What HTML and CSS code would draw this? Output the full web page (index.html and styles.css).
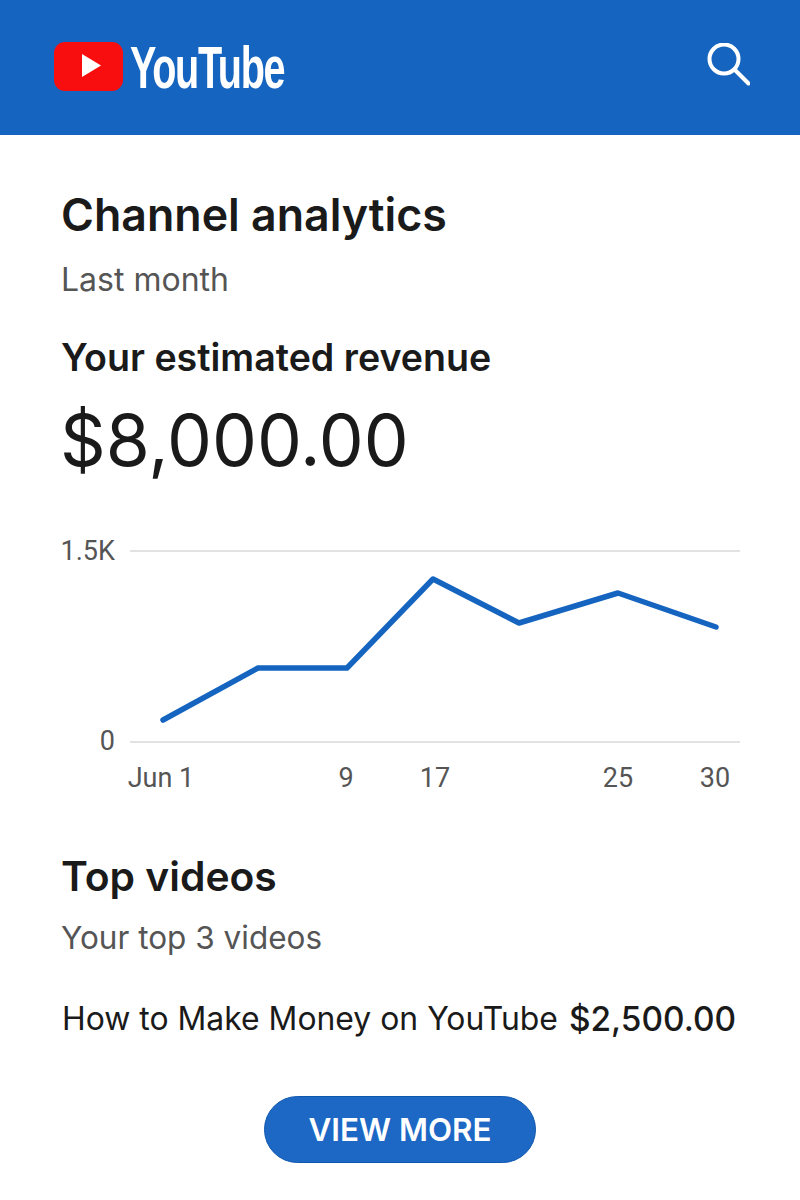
FILE: index.html
```html
<!DOCTYPE html>
<html lang="en">
<head>
<meta charset="utf-8">
<title>Channel analytics</title>
<link rel="stylesheet" href="styles.css">
</head>
<body>
<header class="topbar">
  <div class="brand">
    <svg class="brand-mark" viewBox="0 0 70 50" width="70" height="50" aria-hidden="true">
      <rect x="0" y="0" width="69" height="49" rx="11" fill="#f80e0e"/>
      <path d="M28 12 L47 23.5 L28 35 Z" fill="#fff"/>
    </svg>
    <span class="brand-name">YouTube</span>
  </div>
  <svg class="search" viewBox="0 0 44 44" width="44" height="44" aria-hidden="true">
    <circle cx="18" cy="16" r="14.5" fill="none" stroke="#fff" stroke-width="4"/>
    <path d="M29 27 L42.5 40.5" fill="none" stroke="#fff" stroke-width="4" stroke-linecap="round"/>
  </svg>
</header>
<main class="content">
  <h1 class="title">Channel analytics</h1>
  <p class="sub period">Last month</p>
  <h2 class="label">Your estimated revenue</h2>
  <p class="amount">$8,000.00</p>
  <svg class="chart" viewBox="0 0 800 270" width="800" height="270" role="img" aria-label="Revenue chart">
    <line class="grid" x1="130" y1="21" x2="740" y2="21"/>
    <line class="grid" x1="130" y1="212" x2="740" y2="212"/>
    <text class="tick" x="115" y="30" text-anchor="end">1.5K</text>
    <text class="tick" x="115" y="220" text-anchor="end">0</text>
    <polyline class="series" points="163,190 258,138 347,138 433,49 519,93 618,63 716,97"/>
    <text class="tick" x="161" y="257" text-anchor="middle">Jun 1</text>
    <text class="tick" x="346" y="257" text-anchor="middle">9</text>
    <text class="tick" x="435" y="257" text-anchor="middle">17</text>
    <text class="tick" x="618" y="257" text-anchor="middle">25</text>
    <text class="tick" x="715" y="257" text-anchor="middle">30</text>
  </svg>
  <h2 class="section">Top videos</h2>
  <p class="sub videos">Your top 3 videos</p>
  <div class="video-row">
    <span class="video-name">How to Make Money on YouTube</span>
    <span class="video-amount">$2,500.00</span>
  </div>
  <div class="actions"><button class="more" type="button">VIEW MORE</button></div>
</main>
</body>
</html>
```
FILE: styles.css
```css
* { box-sizing: border-box; }
html, body { margin: 0; padding: 0; }
body {
  width: 800px;
  height: 1200px;
  overflow: hidden;
  background: #fff;
  color: #1a1a1a;
  font-family: Inter, "Noto Sans", sans-serif;
}
.topbar {
  height: 135px;
  background: #1565c0;
  display: flex;
  align-items: center;
  justify-content: space-between;
  padding: 0 50px 0 54px;
}
.brand { display: flex; align-items: center; gap: 6px; }
.brand-mark { display: block; margin-top: -1px; }
.brand-name {
  font-family: "Liberation Sans", sans-serif;
  font-weight: 700;
  font-size: 60px;
  line-height: 60px;
  color: #fff;
  letter-spacing: -2px;
  display: inline-block;
  transform: scaleX(0.66);
  transform-origin: left center;
}
.search { display: block; margin-top: -6px; }
.content { padding: 0 0 0 61px; }
.title { margin: 51px 0 0; font-size: 44.7px; line-height: 58px; font-weight: 600; }
.sub { margin: 0; color: #555; font-size: 32px; line-height: 42px; }
.period { margin-top: 15px; }
.label { margin: 34px 0 0; font-size: 37.6px; line-height: 46px; font-weight: 600; }
.amount { margin: 16px 0 0 -1px; font-size: 71.3px; line-height: 86px; font-weight: 400; }
.chart { display: block; margin: 47px 0 0 -61px; }
.grid { stroke: #d9d9d9; stroke-width: 1.5; }
.tick { fill: #555; font-family: Roboto, sans-serif; font-size: 27px; }
.series { fill: none; stroke: #1565c0; stroke-width: 5.5; stroke-linecap: round; stroke-linejoin: round; }
.section { margin: 48px 0 0; font-size: 40.8px; line-height: 56px; font-weight: 600; }
.videos { margin-top: 13px; font-size: 31.5px; }
.video-row { display: flex; justify-content: space-between; width: 674px; margin: 38px 0 0 1px; font-size: 31.9px; line-height: 44px; color: #1a1a1a; }
.video-amount { font-size: 33.4px; font-weight: 500; }
.actions { display: flex; justify-content: center; margin: 55px 0 0 -61px; }
.more {
  width: 272px;
  height: 67px;
  border: 1px solid #0f57ad;
  border-radius: 34px;
  background: #1c68c4;
  color: #fff;
  font-family: inherit;
  font-size: 31.4px;
  font-weight: 600;
}
```
